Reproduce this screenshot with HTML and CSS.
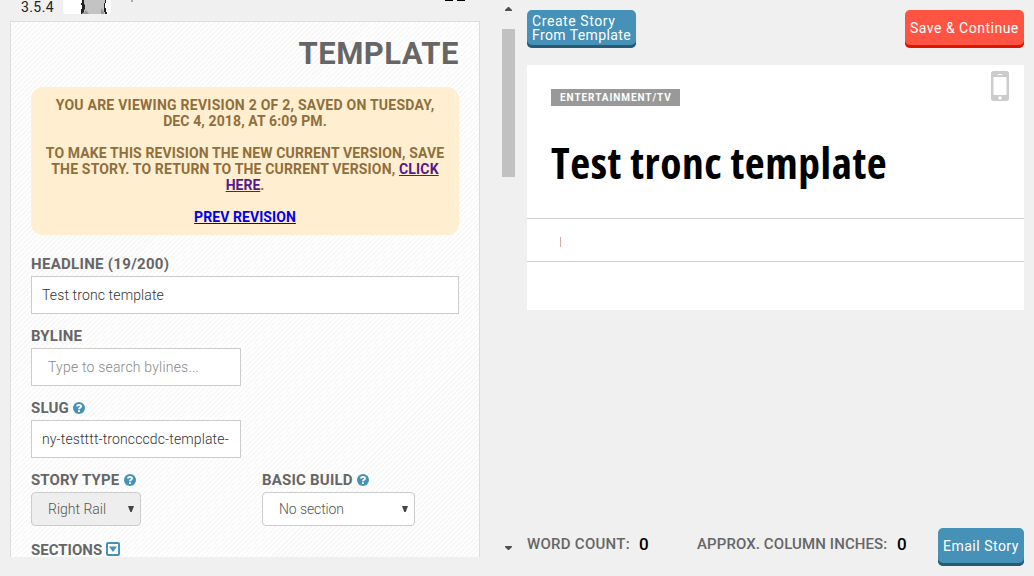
FILE: index.html
```html
<!DOCTYPE html>
<html lang="en">
<head>
<meta charset="utf-8">
<title>Template</title>
<link rel="stylesheet" href="styles.css">
</head>
<body>
<div class="app">
  <div class="editor">
    <div class="topbar">
      <span class="version">3.5.4</span>
      <svg class="avatar" width="48" height="14" viewBox="0 0 48 14"><path d="M0 0H48V11Q48 14 45 14H3Q0 14 0 11Z" fill="#fff"/><path d="M20 0H42V14H20Z" fill="#c3c3c3"/><path d="M19 0h2v4l1 1v4l-1 1v2l-2 2h-1V9h1V5h-1V3h1zM42 0h1v3h-1v5h1v4h1v2h-2v-2h-1V3h1z" fill="#222"/><path d="M20 14l3-4 3 4zM38 14V8l3 4v2z" fill="#999"/></svg>
      <svg class="marks" width="340" height="4" viewBox="0 0 340 4"><path d="M6 0h2v2H6z" fill="#aaa"/><path d="M320 0h8v1h-8zM332 0h8v1h-8z" fill="#000"/></svg>
    </div>
    <form class="panel">
      <h1 class="panel-title">TEMPLATE</h1>
      <div class="notice">
        <p><span class="n1">YOU ARE VIEWING REVISION 2 OF 2, SAVED ON TUESDAY,</span><br><span class="n2">DEC 4, 2018, AT 6:09 PM.</span></p>
        <p><span class="n3">TO MAKE THIS REVISION THE NEW CURRENT VERSION, SAVE</span><br><span class="n4">THE STORY. TO RETURN TO THE CURRENT VERSION, <a class="visited" href="#">CLICK</a></span><br><a class="visited" href="#">HERE</a>.</p>
        <p><a class="prev" href="#">PREV REVISION</a></p>
      </div>
      <div class="label first"><span class="l-headline">HEADLINE (19/200)</span></div>
      <div class="input"><span class="t-headline">Test tronc template</span></div>
      <div class="label"><span class="l-byline">BYLINE</span></div>
      <div class="input short hint"><span class="t-byline">Type to search bylines...</span></div>
      <div class="label"><span class="l-slug">SLUG</span><svg class="help" viewBox="0 0 12 12"><circle cx="6" cy="6" r="6"/><path d="M4 4.6C4 2.4 8 2.3 8 4.4 8 5.8 6 5.6 6 7.2M6 8.2V10"/></svg></div>
      <div class="input short"><span class="t-slug">ny-testttt-troncccdc-template-</span></div>
      <div class="row">
        <div class="col">
          <div class="label"><span class="l-type">STORY TYPE</span><svg class="help" viewBox="0 0 12 12"><circle cx="6" cy="6" r="6"/><path d="M4 4.6C4 2.4 8 2.3 8 4.4 8 5.8 6 5.6 6 7.2M6 8.2V10"/></svg></div>
          <div class="select type"><span>Right Rail</span><svg width="6" height="7" viewBox="0 0 6 7"><path d="M0 0H6L3.7 6H2.3Z" fill="#444"/></svg></div>
        </div>
        <div class="col">
          <div class="label"><span class="l-build">BASIC BUILD</span><svg class="help" viewBox="0 0 12 12"><circle cx="6" cy="6" r="6"/><path d="M4 4.6C4 2.4 8 2.3 8 4.4 8 5.8 6 5.6 6 7.2M6 8.2V10"/></svg></div>
          <div class="select build"><span class="t-build">No section</span><svg width="6" height="7" viewBox="0 0 6 7"><path d="M0 0H6L3.7 6H2.3Z" fill="#444"/></svg></div>
        </div>
      </div>
      <div class="label sections"><span>SECTIONS</span><svg class="toggle" width="14" height="14" viewBox="0 0 14 14"><rect x="1" y="1" width="12" height="12" rx="1" fill="#fff" stroke="#4591b8" stroke-width="2"/><path d="M3 4.5h8L7 10z" fill="#4591b8"/></svg></div>
    </form>
  </div>
  <div class="scrollbar">
    <svg width="7" height="4" viewBox="0 0 7 4"><path d="M0 4V3L3 0H4L7 3V4Z" fill="#505050"/></svg>
    <div class="thumb"></div>
    <svg class="down" width="7" height="4" viewBox="0 0 7 4"><path d="M0 0V1L3 4H4L7 1V0Z" fill="#505050"/></svg>
  </div>
  <div class="preview">
    <div class="actions">
      <div class="btn create"><span><span class="wide">Create Story</span><br>From Template</span></div>
      <div class="btn save"><span>Save &amp; Continue</span></div>
    </div>
    <div class="card">
      <div class="card-head">
        <div class="tag"><span>ENTERTAINMENT/TV</span></div>
        <svg class="phone" width="18" height="30" viewBox="0 0 18 30"><rect width="18" height="30" rx="2.5" fill="#ccc"/><path d="M2.5 6h13v18h-13zM7 3h4v1H7z" fill="#fff"/><circle cx="9" cy="27" r="1.8" fill="#fff"/></svg>
      </div>
      <h2 class="headline">Test tronc template</h2>
      <div class="body-line"><div class="caret"></div></div>
    </div>
    <div class="footer">
      <span class="stat words">WORD COUNT:</span><span class="num">0</span>
      <span class="stat inches">APPROX. COLUMN INCHES:</span><span class="num">0</span>
      <div class="btn email"><span>Email Story</span></div>
    </div>
  </div>
</div>
</body>
</html>
```
FILE: styles.css
```css
* { box-sizing: border-box; }
body { margin: 0; background: #f0f0f0; font-family: Roboto, "Liberation Sans", sans-serif; font-size: 14px; white-space: nowrap; }
h1, h2, p { margin: 0; }
svg { display: block; flex: none; }
.app { display: flex; width: 1034px; height: 576px; overflow: hidden; }
.editor { width: 502px; height: 557px; padding-left: 10px; }
.topbar { height: 21px; display: flex; align-items: flex-start; padding-left: 11px; }
.version { width: 42px; font-size: 14px; line-height: 16px; margin-top: -1px; color: #222; letter-spacing: 0.4px; }
.marks { margin-left: 14px; }
.panel { width: 470px; height: 536px; border: 1px solid #ddd; border-bottom: 0; padding: 0 20px; background: repeating-linear-gradient(135deg, #fff 0 1.8px, #f8f8f8 1.8px 3.54px); }
.panel-title { height: 65px; line-height: 63px; text-align: right; font-size: 31px; font-weight: 700; color: #666; letter-spacing: 0.5px; }
.notice { width: 428px; height: 148px; padding: 10px 0; border-radius: 12px; background: #ffeed0; color: #8f6f3c; text-align: center; font-weight: 700; font-size: 14px; line-height: 16px; }
.notice p + p { margin-top: 16px; }
.n1 { letter-spacing: 0.25px; }
.n2 { letter-spacing: 0.12px; }
.n3 { letter-spacing: 0.12px; }
.n4 { letter-spacing: 0.17px; }
.prev { letter-spacing: 0.08px; }
a { color: #00e; }
a.visited { color: #551a8b; }
.label { height: 34px; padding-top: 11px; line-height: 22px; display: flex; font-size: 15px; font-weight: 700; color: #666; }
.label.first { height: 41px; padding-top: 18px; }
.label.sections { height: 31px; padding-top: 15px; line-height: 18px; }
.l-headline { letter-spacing: 0.3px; }
.l-byline { letter-spacing: 0.2px; }
.l-slug { letter-spacing: 0.15px; }
.l-type { letter-spacing: 0.08px; }
.l-build { letter-spacing: 0.2px; }
.help { width: 12px; height: 12px; margin: 5px 0 0 4.5px; fill: #4591b8; }
.help path { fill: none; stroke: #fff; stroke-width: 1.9; }
.toggle { margin: 1px 0 0 4px; }
.input { height: 38px; border: 1px solid #ccc; background: #fff; padding-left: 10px; line-height: 37px; color: #333; font-weight: 300; overflow: hidden; }
.t-headline { letter-spacing: 0.13px; }
.t-byline { letter-spacing: 0.2px; }
.t-slug { letter-spacing: 0.13px; }
.t-build { letter-spacing: -0.1px; }
.short { width: 210px; }
.hint { padding-left: 16px; color: #888; }
.row { display: flex; }
.col { width: 231px; flex: none; }
.col + .col { width: 153px; }
.select { height: 34px; border: 1px solid #ccc; border-radius: 4px; background: #fff; display: flex; align-items: center; justify-content: space-between; padding: 0 6px 0 16px; color: #555; font-weight: 300; }
.type { width: 110px; background: #eee; }
.build { width: 153px; }
.scrollbar { width: 13px; height: 557px; display: flex; flex-direction: column; align-items: center; padding: 7px 0; }
.thumb { width: 13px; height: 148px; margin-top: 18px; background: #c1c1c1; }
.down { margin-top: auto; }
.preview { width: 519px; padding: 10px 10px 10px 12px; display: flex; flex-direction: column; }
.actions { display: flex; justify-content: space-between; height: 55px; }
.btn { height: 38px; border-radius: 5px; padding: 0 0 3px 5px; display: flex; align-items: center; line-height: 14px; color: #fff; background: #4591b8; box-shadow: inset 0 -3px #285a72; flex: none; letter-spacing: 0.5px; }
.create { width: 109px; letter-spacing: 0.4px; }
.wide { letter-spacing: 0.58px; }
.save { width: 119px; background: #ff5444; box-shadow: inset 0 -3px #dc1600; }
.card { height: 245px; background: #fff; }
.card-head { height: 48px; padding: 6px 15px 0 24px; display: flex; justify-content: space-between; }
.tag { width: 129px; height: 17px; margin-top: 18px; padding-left: 9px; line-height: 17px; background: #999; color: #fff; font-size: 10px; font-weight: 700; letter-spacing: 0.93px; }
.headline { height: 105px; padding-left: 24px; line-height: 100px; font-family: "Open Sans", sans-serif; font-weight: 700; font-stretch: 75%; font-size: 43.5px; letter-spacing: 0.55px; color: #000; }
.body-line { height: 44px; border: solid #ccc; border-width: 1px 0; padding: 18px 33px; }
.caret { width: 1px; height: 10px; background: #d6a9a9; }
.footer { margin-top: auto; height: 38px; display: flex; }
.stat { font-size: 15px; font-weight: 500; line-height: 32px; color: #666; }
.words { width: 112px; letter-spacing: 0.27px; }
.inches { width: 200px; letter-spacing: 0.1px; }
.num { width: 58px; font-size: 17px; font-weight: 500; line-height: 33px; color: #000; }
.inches + .num { width: 20px; }
.email { width: 86px; margin-left: auto; }
```
